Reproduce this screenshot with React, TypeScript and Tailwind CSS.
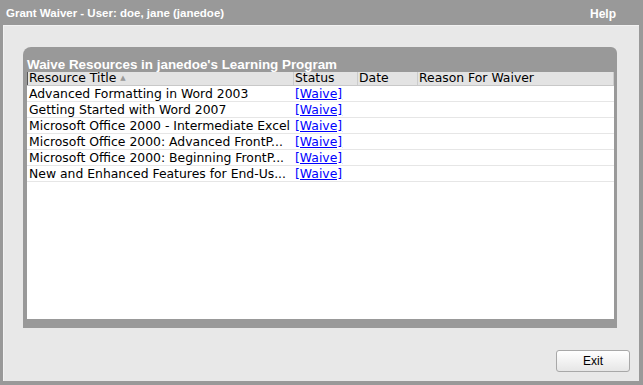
const rows = [
  'Advanced Formatting in Word 2003',
  'Getting Started with Word 2007',
  'Microsoft Office 2000 - Intermediate Excel',
  'Microsoft Office 2000: Advanced FrontP...',
  'Microsoft Office 2000: Beginning FrontP...',
  'New and Enhanced Features for End-Us...',
]

export default function App() {
  return (
    <div className="flex h-[385px] w-[643px] flex-col bg-[#999999] font-['Liberation_Sans',Arial,sans-serif]">
      <div className="flex h-[25px] items-center justify-between pl-[6px] pr-[27px] pt-[2px] text-[12px] font-bold text-white">
        <span className="text-[11.5px]">Grant Waiver - User: doe, jane (janedoe)</span>
        <span>Help</span>
      </div>

      <div className="mb-[4px] ml-[3px] mr-[4px] flex flex-1 flex-col border-l border-t border-[#f2f2f2] bg-[#e8e8e8]">
        <div className="ml-[19px] mr-[22px] mt-[21px] flex h-[281px] flex-col rounded-tl-[8px] rounded-tr-[6px] bg-[#999999] px-[4px] pb-[9px] pr-[3px]">
          <div className="flex h-[25px] items-end pb-[1px] text-[13.4px] font-bold leading-none text-white">
            Waive Resources in janedoe's Learning Program
          </div>
          <div className="flex-1 bg-white font-['DejaVu_Sans',Verdana,sans-serif] text-[12.4px] leading-none text-black">
            <div className="grid h-[14px] grid-cols-[266px_64px_60px_1fr] border-b border-[#c8c8c8] bg-[#e3e3e3]">
              <div className="flex items-center gap-[4px] border-l border-[#555] pl-[1px]">
                Resource Title
                <span className="text-[7px] text-[#999]">▲</span>
              </div>
              <div className="flex items-center border-l border-[#cccccc] pl-[1px]">Status</div>
              <div className="flex items-center border-l border-[#cccccc] pl-[1px]">Date</div>
              <div className="flex items-center border-l border-r border-[#cccccc] pl-[1px]">Reason For Waiver</div>
            </div>
            {rows.map((title) => (
              <div
                key={title}
                className="grid h-[16px] grid-cols-[266px_64px_60px_1fr] border-b border-[#e6e6e6]"
              >
                <div className="flex items-center overflow-hidden pl-[2px] pt-[1px] whitespace-nowrap">{title}</div>
                <div className="flex items-center pl-[2px] pt-[1px]">
                  <a href="#" className="text-[#0000ff] underline">
                    [Waive]
                  </a>
                </div>
                <div />
                <div />
              </div>
            ))}
          </div>
        </div>

        <div className="mt-[22px] flex justify-end pr-[9px]">
          <button className="h-[22px] w-[74px] rounded-[3px] border border-[#a8a8a8] bg-gradient-to-b from-[#ffffff] to-[#e6e6e6] text-[12px] text-black">
            Exit
          </button>
        </div>
      </div>
    </div>
  )
}
